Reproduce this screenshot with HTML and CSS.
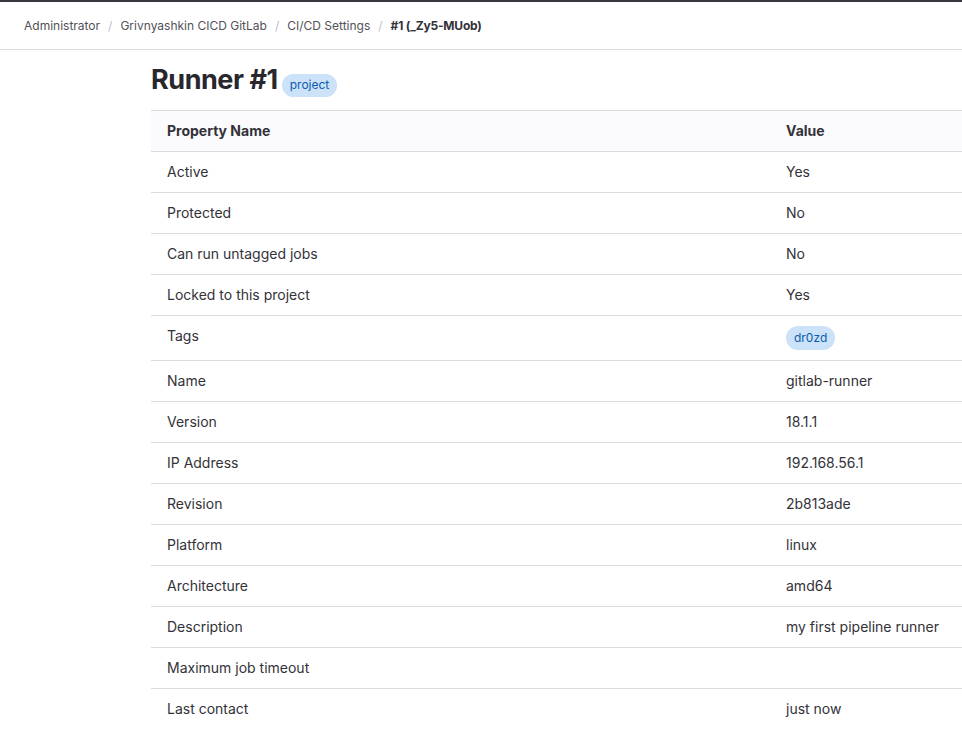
FILE: index.html
```html
<!DOCTYPE html>
<html>
<head>
<meta charset="utf-8">
<link rel="stylesheet" href="styles.css">
</head>
<body>
<div class="page">
  <nav class="crumbs">
    <span class="crumb">Administrator</span><span class="sep">/</span>
    <span class="crumb">Grivnyashkin CICD GitLab</span><span class="sep">/</span>
    <span class="crumb">CI/CD Settings</span><span class="sep">/</span>
    <span class="crumb current">#1 (_Zy5-MUob)</span>
  </nav>
  <main class="content">
    <h1 class="title"><span class="title-text">Runner #1</span><span class="badge">project</span></h1>
    <table class="props">
      <thead>
        <tr><th class="c1">Property Name</th><th>Value</th></tr>
      </thead>
      <tbody>
        <tr><td class="c1">Active</td><td>Yes</td></tr>
        <tr><td class="c1">Protected</td><td>No</td></tr>
        <tr><td class="c1">Can run untagged jobs</td><td>No</td></tr>
        <tr><td class="c1">Locked to this project</td><td>Yes</td></tr>
        <tr><td class="c1">Tags</td><td><span class="badge tag">dr0zd</span></td></tr>
        <tr><td class="c1">Name</td><td>gitlab-runner</td></tr>
        <tr><td class="c1">Version</td><td>18.1.1</td></tr>
        <tr><td class="c1">IP Address</td><td>192.168.56.1</td></tr>
        <tr><td class="c1">Revision</td><td>2b813ade</td></tr>
        <tr><td class="c1">Platform</td><td>linux</td></tr>
        <tr><td class="c1">Architecture</td><td>amd64</td></tr>
        <tr><td class="c1">Description</td><td>my first pipeline runner</td></tr>
        <tr><td class="c1">Maximum job timeout</td><td></td></tr>
        <tr class="last"><td class="c1">Last contact</td><td>just now</td></tr>
      </tbody>
    </table>
  </main>
</div>
</body>
</html>
```
FILE: styles.css
```css
html, body {
  margin: 0;
  padding: 0;
  background: #fff;
  overflow: hidden;
}
body {
  font-family: Inter, "Noto Sans", sans-serif;
  color: #333238;
  width: 962px;
  height: 737px;
}
.page {
  border-top: 2px solid #3a383f;
  overflow: hidden;
  height: 735px;
}
.crumbs {
  height: 47px;
  border-bottom: 1px solid #dcdcde;
  display: flex;
  align-items: center;
  padding-left: 24px;
  font-size: 12px;
  color: #535158;
  white-space: nowrap;
}
.sep {
  color: #bfbfc3;
  margin: 0 8px 0 8px;
}
.crumb.current {
  font-weight: 700;
  color: #333238;
  letter-spacing: -0.2px;
}
.content {
  padding-left: 151px;
}
.title {
  margin: 0;
  padding: 12px 0 12px;
  height: 36px;
  line-height: 36px;
  display: flex;
  align-items: baseline;
}
.title-text {
  font-size: 27px;
  font-weight: 700;
  letter-spacing: -0.45px;
  color: #28272d;
}
.badge {
  display: inline-block;
  background: #cbe2f9;
  color: #0b5cad;
  font-size: 12px;
  font-weight: 400;
  line-height: 16px;
  padding: 3px 8px 4px;
  border-radius: 12px;
  margin-left: 4px;
}
.badge.tag {
  margin: 0;
  padding: 4px 8px 4px;
  vertical-align: top;
}
.props {
  border-collapse: collapse;
  width: 1100px;
  font-size: 14px;
  table-layout: fixed;
}
.props th, .props td {
  text-align: left;
  vertical-align: top;
  padding: 10px 16px 10px;
  line-height: 20px;
  border-top: 1px solid #dcdcde;
  border-bottom: 1px solid #dcdcde;
  white-space: nowrap;
}
.props tr.last td {
  border-bottom: 0;
}
.props th {
  background: #fbfafd;
  font-weight: 700;
  color: #333238;
}
.props .c1 {
  width: 587px;
}
```
